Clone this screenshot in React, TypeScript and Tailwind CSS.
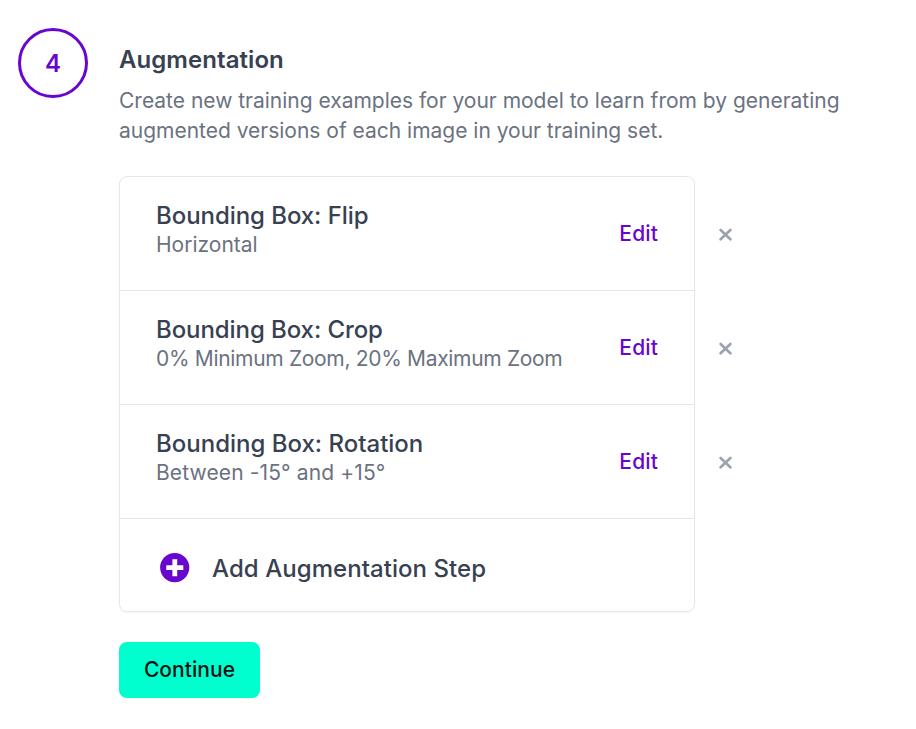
import React from "react";

const steps = [
  { name: "Bounding Box: Flip", nameSpacing: "tracking-[-0.06px]", detail: "Horizontal", spacing: "tracking-normal" },
  { name: "Bounding Box: Crop", nameSpacing: "tracking-[-0.08px]", detail: "0% Minimum Zoom, 20% Maximum Zoom", spacing: "tracking-[-0.32px]" },
  { name: "Bounding Box: Rotation", nameSpacing: "tracking-normal", detail: "Between -15° and +15°", spacing: "tracking-[0.12px]" },
];

function Cross() {
  return (
    <svg className="block h-[15px] w-[15px]" viewBox="0 0 15 15" stroke="#9ca3af" strokeWidth="2.7" strokeLinecap="round">
      <path d="M2.6 3 12.4 12.3M12.4 3 2.6 12.3" />
    </svg>
  );
}

function Plus() {
  return (
    <svg className="block h-[30px] w-[30px]" viewBox="0 0 30 30">
      <circle cx="14.7" cy="14.6" r="14.6" fill="#6706ce" />
      <path d="M14.8 6.2V23.2M6.3 14.7H23.3" stroke="#fff" strokeWidth="4.8" />
    </svg>
  );
}

export default function App() {
  return (
    <main className="flex h-[729px] w-[916px] bg-white pl-[18px] pt-7 font-['Inter',sans-serif]">
      <div className="flex h-[70px] w-[70px] shrink-0 items-center justify-center rounded-full border-3 border-[#6706ce] pt-[2px] text-2xl font-semibold text-[#6706ce]">
        4
      </div>
      <section className="ml-[31px] pt-[14px]">
        <h2 className="text-2xl leading-9 font-semibold tracking-[0.06px] text-[#374151]">Augmentation</h2>
        <p className="mt-2 w-[740px] text-[21px] leading-[30px] tracking-[-0.01px] text-[#6b7280]">
          Create new training examples for your model to learn from by generating
          <br />
          augmented versions of each image in your training set.
        </p>
        <div className="mt-[30px] h-[436px] w-[576px] rounded-lg border border-gray-200 shadow-xs">
          {steps.map((s) => (
            <div key={s.name} className="flex h-[114px] w-[624px] items-center">
              <div className="flex h-[114px] w-[574px] shrink-0 items-center justify-between border-b border-gray-200 px-9">
                <div className="pb-2">
                  <h3 className={`text-2xl leading-[30px] font-medium text-[#374151] ${s.nameSpacing}`}>{s.name}</h3>
                  <p className={`text-[21px] leading-[28px] text-[#6b7280] ${s.spacing}`}>{s.detail}</p>
                </div>
                <button className="text-[21px] font-medium tracking-[0.15px] text-[#6706ce]">Edit</button>
              </div>
              <button className="ml-6" aria-label="Remove"><Cross /></button>
            </div>
          ))}
          <button className="flex h-[98px] items-center pl-10">
            <Plus />
            <span className="ml-[22px] pt-[2px] text-2xl font-medium tracking-[0.06px] text-[#374151]">Add Augmentation Step</span>
          </button>
        </div>
        <button className="mt-[30px] h-14 w-[141px] rounded-lg bg-[#00ffce] text-[21px] font-medium tracking-[0.05px] text-[#111]">
          Continue
        </button>
      </section>
    </main>
  );
}
